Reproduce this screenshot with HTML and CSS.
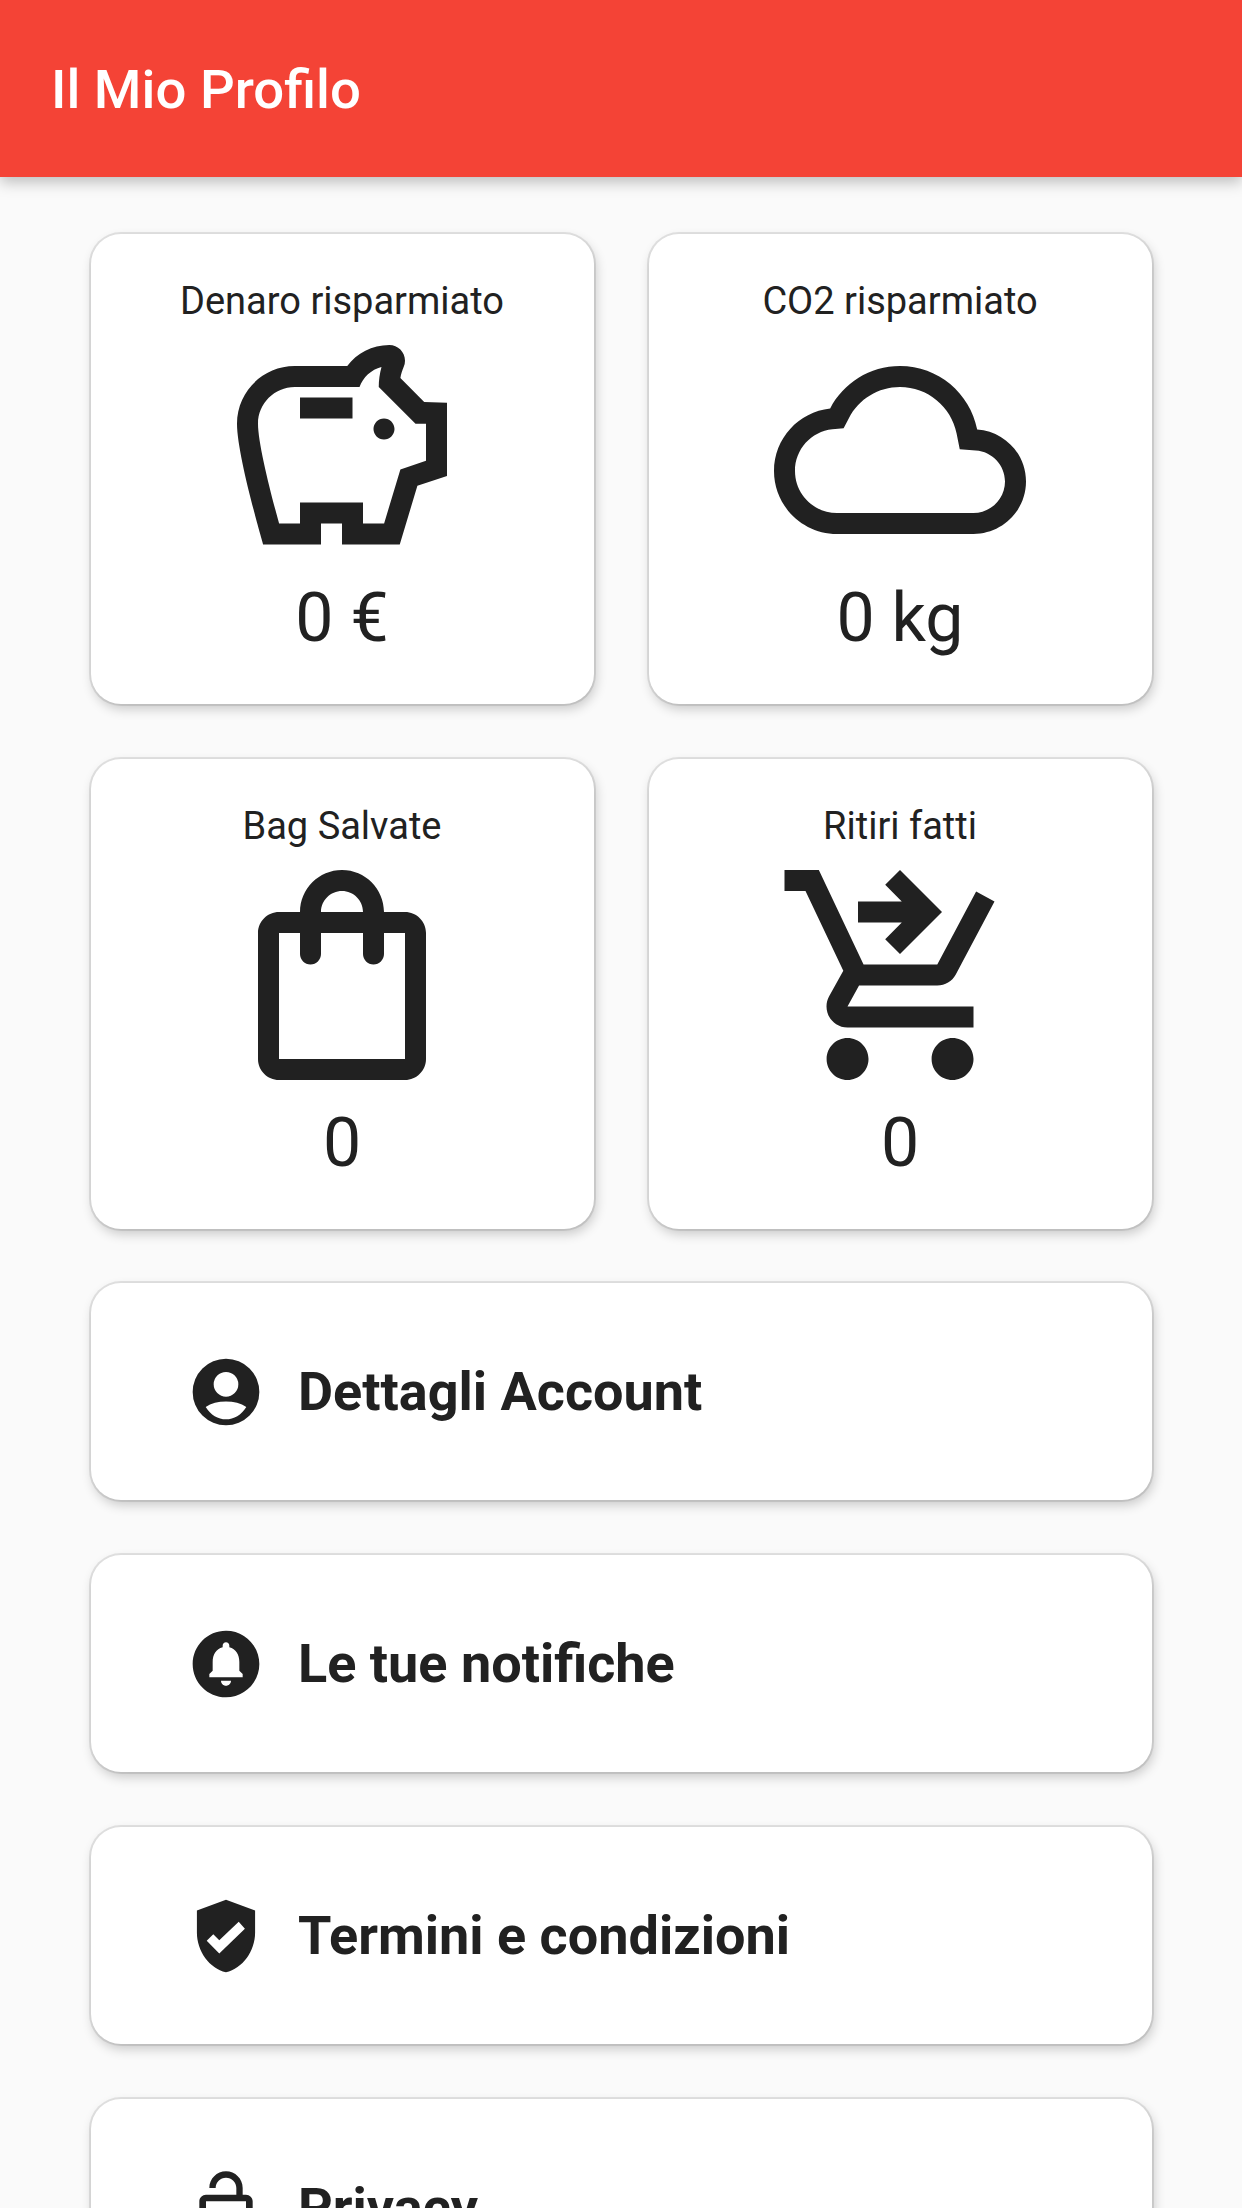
FILE: index.html
```html
<!DOCTYPE html>
<html lang="it">
  <head>
    <meta charset="UTF-8" />
    <meta name="viewport" content="width=device-width, initial-scale=1.0" />
    <title>Il Mio Profilo</title>
    <link rel="stylesheet" href="styles.css">
  </head>
  <body>
    <div class="screen">
      <header class="app-bar">
        <h1 class="app-title">Il Mio Profilo</h1>
      </header>

      <main class="content">
        <section class="stats">
          <div class="card stat">
            <p class="stat-label">Denaro risparmiato</p>
            <svg class="stat-icon" viewBox="0 0 24 24"><path d="M15 10c0-.55.45-1 1-1s1 .45 1 1-.45 1-1 1-1-.45-1-1zM8 9h5V7H8v2zm14-1.5v6.97l-2.82.94L17.5 21H12v-2h-2v2H4.5S2 12.54 2 9.5 4.46 4 7.5 4h5c.91-1.21 2.36-2 4-2 .83 0 1.5.67 1.5 1.5 0 .21-.04.4-.12.58-.14.34-.26.7-.32 1.07l2.27 2.27L22 7.5zm-2 2h-1L15.5 6c0-.65.09-1.29.26-1.91-.97.25-1.76.97-2.09 1.91H7.5C5.57 6 4 7.57 4 9.5c0 1.88 1.22 6.65 2.01 9.5H8v-2h6v2h2.01l1.55-5.15L20 13.03V9.5z"/></svg>
            <p class="stat-value">0 €</p>
          </div>
          <div class="card stat">
            <p class="stat-label">CO2 risparmiato</p>
            <svg class="stat-icon" viewBox="0 0 24 24"><path d="M12 6c2.62 0 4.88 1.86 5.39 4.43l.3 1.5 1.53.11c1.56.1 2.78 1.41 2.78 2.96 0 1.65-1.35 3-3 3H6c-2.21 0-4-1.79-4-4 0-2.05 1.53-3.76 3.56-3.97l1.07-.11.5-.95C8.08 7.14 9.94 6 12 6m0-2C9.11 4 6.6 5.64 5.35 8.04 2.34 8.36 0 10.91 0 14c0 3.31 2.69 6 6 6h13c2.76 0 5-2.24 5-5 0-2.64-2.05-4.78-4.65-4.96C18.67 6.59 15.64 4 12 4z"/></svg>
            <p class="stat-value">0 kg</p>
          </div>
          <div class="card stat">
            <p class="stat-label">Bag Salvate</p>
            <svg class="stat-icon" viewBox="0 0 24 24"><path d="M18 6h-2c0-2.21-1.79-4-4-4S8 3.79 8 6H6c-1.1 0-2 .9-2 2v12c0 1.1.9 2 2 2h12c1.1 0 2-.9 2-2V8c0-1.1-.9-2-2-2zm-6-2c1.1 0 2 .9 2 2h-4c0-1.1.9-2 2-2zm6 16H6V8h2v2c0 .55.45 1 1 1s1-.45 1-1V8h4v2c0 .55.45 1 1 1s1-.45 1-1V8h2v12z"/></svg>
            <p class="stat-value">0</p>
          </div>
          <div class="card stat">
            <p class="stat-label">Ritiri fatti</p>
            <svg class="stat-icon" viewBox="0 0 24 24"><path d="M12 2l4 4-4 4-1.41-1.41L12.17 7H8V5h4.17l-1.58-1.59zM15.55 13c.75 0 1.41-.41 1.75-1.03L21 5l-1.75-.96L15.55 11H8.53L4.27 2H1v2h2l3.6 7.59-1.35 2.44C4.52 15.37 5.48 17 7 17h12v-2H7l1.1-2h7.45zM7 18c-1.1 0-1.99.9-1.99 2S5.9 22 7 22s2-.9 2-2-.9-2-2-2zm10 0c-1.1 0-1.99.9-1.99 2S15.9 22 17 22s2-.9 2-2-.9-2-2-2z"/></svg>
            <p class="stat-value">0</p>
          </div>
        </section>

        <nav class="menu">
          <a class="card menu-row">
            <svg class="menu-icon" viewBox="0 0 24 24"><path fill-rule="evenodd" d="M12 2a10 10 0 1 0 0 20 10 10 0 0 0 0-20zM12 6a3.7 3.7 0 1 1 0 7.4A3.7 3.7 0 0 1 12 6zM5.9 16.5C7.5 15.4 9.7 14.85 12 14.85s4.5.55 6.1 1.65C16.6 18.9 14.4 20.2 12 20.2S7.4 18.9 5.9 16.5z"/></svg>
            <span class="menu-text">Dettagli Account</span>
          </a>
          <a class="card menu-row">
            <svg class="menu-icon" viewBox="0 0 24 24"><path d="M12 2C6.48 2 2 6.48 2 12s4.48 10 10 10 10-4.48 10-10S17.52 2 12 2zm0 16.5c-.83 0-1.5-.67-1.5-1.5h3c0 .83-.67 1.5-1.5 1.5zm5-2.5H7v-1l1-1v-2.61C8 9.27 9.03 7.47 11 7v-.5c0-.57.43-1 1-1s1 .43 1 1V7c1.97.47 3 2.28 3 4.39V14l1 1v1z"/></svg>
            <span class="menu-text">Le tue notifiche</span>
          </a>
          <a class="card menu-row">
            <svg class="menu-icon" viewBox="1 1 22 22"><path fill-rule="evenodd" d="M12 2L4 5v6.09c0 5.05 3.41 9.76 8 10.91 4.59-1.15 8-5.86 8-10.91V5l-8-3zM10.15 16.84L6.7 13.3l1.8-1.8 1.65 1.7 5.35-5.1 1.7 1.9z"/></svg>
            <span class="menu-text">Termini e condizioni</span>
          </a>
          <a class="card menu-row">
            <svg class="menu-icon" viewBox="0 0 24 24"><path d="M12 17c1.1 0 2-.9 2-2s-.9-2-2-2-2 .9-2 2 .9 2 2 2zm6-9h-1V6c0-2.76-2.24-5-5-5S7 3.24 7 6h1.9c0-1.71 1.39-3.1 3.1-3.1 1.71 0 3.1 1.39 3.1 3.1v2H6c-1.1 0-2 .9-2 2v10c0 1.1.9 2 2 2h12c1.1 0 2-.9 2-2V10c0-1.1-.9-2-2-2zm0 12H6V10h12v10z"/></svg>
            <span class="menu-text">Privacy</span>
          </a>
        </nav>
      </main>
    </div>
  </body>
</html>
```

FILE: styles.css
```css
*,
*::after,
*::before {
  box-sizing: border-box;
}
body {
  margin: 0;
  font-family: 'Roboto', 'Liberation Sans', sans-serif;
  color: #212121;
  background-color: #fafafa;
}
p,
h1 {
  margin: 0;
}
svg {
  fill: #212121;
  display: block;
}
/* the page is cut at the window height, last row is only half visible */
.screen {
  height: 100vh;
  overflow: hidden;
}
.app-bar {
  position: relative;
  display: flex;
  align-items: center;
  height: 177px;
  padding-left: 51px;
  background-color: #f44336;
  box-shadow: 0 5px 14px rgba(0, 0, 0, 0.25);
}
.app-title {
  font-size: 54.5px;
  font-weight: 500;
  color: #fff;
}
.content {
  padding: 57px 90px 0 91px;
}
.card {
  background-color: #fff;
  border-radius: 30px;
  box-shadow: 0 0 0 2px rgba(0, 0, 0, 0.09), 2px 5px 12px rgba(0, 0, 0, 0.2);
}
/* stat cards */
.stats {
  display: grid;
  grid-template-columns: 1fr 1fr;
  gap: 55px;
}
.stat {
  display: flex;
  flex-direction: column;
  align-items: center;
  height: 470px;
  padding: 45px 1px 0 0;
}
.stat-label {
  font-size: 38px;
  line-height: 45px;
}
.stat-icon {
  width: 252px;
  height: 252px;
}
.stat-value {
  font-size: 68px;
  line-height: 84px;
}
/* menu rows */
.menu {
  display: flex;
  flex-direction: column;
  gap: 55px;
  margin-top: 54px;
}
.menu-row {
  display: flex;
  flex: none;
  align-items: center;
  gap: 32px;
  height: 217px;
  padding-left: 95px;
}
.menu-icon {
  width: 80px;
  height: 80px;
}
.menu-text {
  font-size: 54px;
  font-weight: 700;
}
```
